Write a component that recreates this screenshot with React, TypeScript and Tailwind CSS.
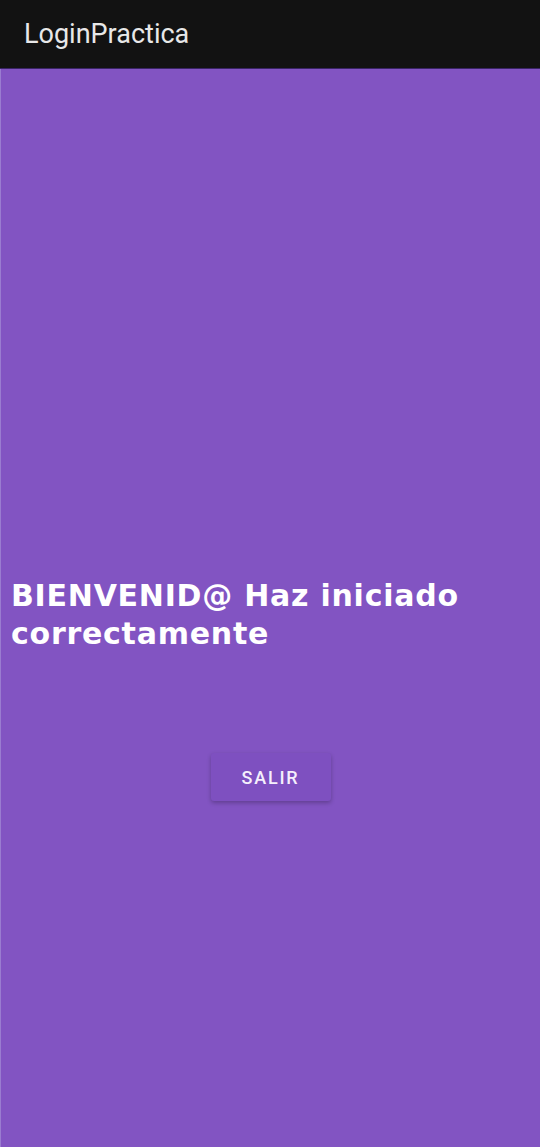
export default function App() {
  return (
    <div className="flex h-[1147px] w-[540px] flex-col bg-[#8254c2]" style={{ fontFamily: "Roboto, 'Liberation Sans', sans-serif" }}>
      {/* toolbar */}
      <div className="flex h-[69px] shrink-0 items-center border-b border-[#3a2466] bg-[#121212] pl-6">
        <span className="text-[27px] text-[#e8e8e8]">LoginPractica</span>
      </div>

      <div className="flex flex-1 flex-col border-l border-[#9a7cd0]">
        <div className="h-[508px]" />
        <h1
          className="px-[10px] text-[30px] font-bold leading-[38px] tracking-[0.025em] text-white"
          style={{ fontFamily: "'DejaVu Sans', sans-serif" }}
        >
          BIENVENID@ Haz iniciado correctamente
        </h1>
        <div className="mt-[100px] flex justify-center">
          <button className="h-[48px] w-[120px] rounded-[3px] bg-[#7e50c0] text-[18px] font-medium tracking-[0.1em] text-[#f5effc] shadow-[0_2px_4px_rgba(0,0,0,0.25)]">
            SALIR
          </button>
        </div>
      </div>
    </div>
  )
}
